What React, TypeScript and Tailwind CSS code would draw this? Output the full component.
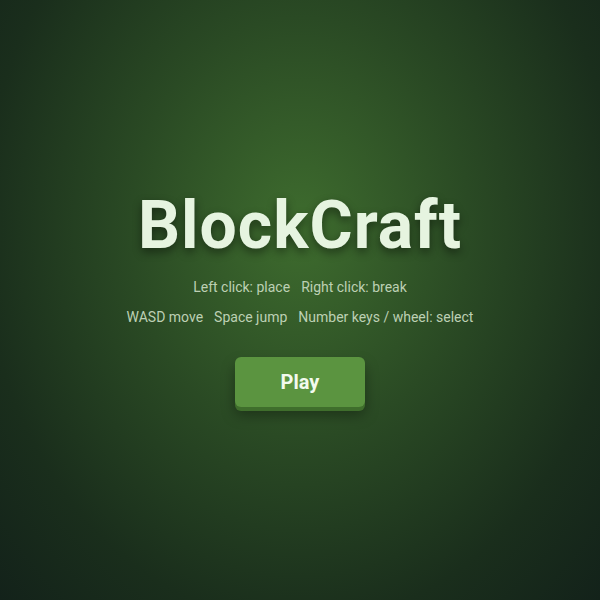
export default function App() {
  return (
    <div className="flex h-[600px] w-[600px] flex-col items-center justify-center bg-[radial-gradient(ellipse_at_50%_38%,#3e6c2e_0%,#2a4a24_40%,#1a2e1c_75%,#13221a_100%)] font-['Roboto',sans-serif]">
      <h1 className="text-[66px] leading-none font-bold tracking-[1px] text-[#e6f4e0] [text-shadow:0_4px_10px_rgba(0,0,0,0.45)]">
        BlockCraft
      </h1>
      <div className="mt-[18px] flex gap-[11px] text-[14px] text-[#bdd0b4]">
        <span>Left click: place</span>
        <span>Right click: break</span>
      </div>
      <div className="mt-[9px] flex gap-[11px] text-[14px] text-[#bdd0b4]">
        <span>WASD move</span>
        <span>Space jump</span>
        <span>Number keys / wheel: select</span>
      </div>
      <button className="mt-[29px] h-[50px] w-[130px] rounded-[6px] bg-[#5b9440] text-[20px] font-bold text-[#f2faee] shadow-[0_4px_0_#3f6e2c,0_8px_14px_rgba(0,0,0,0.35)]">
        Play
      </button>
    </div>
  );
}
